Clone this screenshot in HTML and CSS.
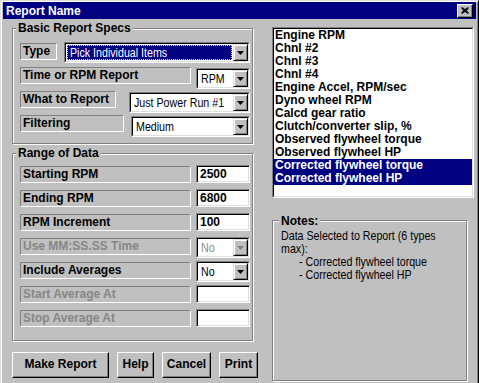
FILE: index.html
```html
<!DOCTYPE html>
<html>
<head>
<meta charset="utf-8">
<link rel="stylesheet" href="styles.css">
</head>
<body>
<div class="window">
  <div class="titlebar">
    <span class="title">Report Name</span>
    <span class="close"><svg width="8" height="7" viewBox="0 0 8 7"><path d="M0.5 0.5 L7.5 6.5 M1.5 0.5 L7.5 5.5 M0.5 1.5 L6.5 6.5 M7.5 0.5 L0.5 6.5 M6.5 0.5 L0.5 5.5 M7.5 1.5 L1.5 6.5" stroke="#000" stroke-width="1" fill="none"/></svg></span>
  </div>
  <div class="main">
    <div class="left">
      <div class="group g1">
        <div class="legend">Basic Report Specs</div>
        <div class="row first">
          <div class="lbl w-type">Type</div>
          <div class="combo w-typec"><div class="combo-in"><div class="val"><div class="sel"><span class="nar">Pick Individual Items</span></div></div><div class="dbtn"><svg width="7" height="4" viewBox="0 0 7 4"><path d="M0 0H7L3.5 4Z" fill="#000"/></svg></div></div></div>
        </div>
        <div class="row">
          <div class="lbl w-time">Time or RPM Report</div>
          <div class="combo w-small"><div class="combo-in"><div class="val"><span class="nar">RPM</span></div><div class="dbtn"><svg width="7" height="4" viewBox="0 0 7 4"><path d="M0 0H7L3.5 4Z" fill="#000"/></svg></div></div></div>
        </div>
        <div class="row">
          <div class="lbl w-what">What to Report</div>
          <div class="combo w-whatc"><div class="combo-in"><div class="val"><span class="nar">Just Power Run #1</span></div><div class="dbtn"><svg width="7" height="4" viewBox="0 0 7 4"><path d="M0 0H7L3.5 4Z" fill="#000"/></svg></div></div></div>
        </div>
        <div class="row">
          <div class="lbl w-filt">Filtering</div>
          <div class="combo w-filtc"><div class="combo-in"><div class="val"><span class="nar">Medium</span></div><div class="dbtn"><svg width="7" height="4" viewBox="0 0 7 4"><path d="M0 0H7L3.5 4Z" fill="#000"/></svg></div></div></div>
        </div>
      </div>

      <div class="group g2">
        <div class="legend">Range of Data</div>
        <div class="row2">
          <div class="lbl w-long">Starting RPM</div>
          <div class="input">2500</div>
        </div>
        <div class="row2">
          <div class="lbl w-long">Ending RPM</div>
          <div class="input">6800</div>
        </div>
        <div class="row2">
          <div class="lbl w-long">RPM Increment</div>
          <div class="input">100</div>
        </div>
        <div class="row2">
          <div class="lbl w-long disabled">Use MM:SS.SS Time</div>
          <div class="combo w-small disabled"><div class="combo-in"><div class="val"><span class="nar">No</span></div><div class="dbtn"><svg width="7" height="4" viewBox="0 0 7 4"><path d="M0 0H7L3.5 4Z" fill="#808080"/></svg></div></div></div>
        </div>
        <div class="row2">
          <div class="lbl w-long">Include Averages</div>
          <div class="combo w-small"><div class="combo-in"><div class="val"><span class="nar">No</span></div><div class="dbtn"><svg width="7" height="4" viewBox="0 0 7 4"><path d="M0 0H7L3.5 4Z" fill="#000"/></svg></div></div></div>
        </div>
        <div class="row2">
          <div class="lbl w-long disabled">Start Average At</div>
          <div class="input"></div>
        </div>
        <div class="row2">
          <div class="lbl w-long disabled">Stop Average At</div>
          <div class="input"></div>
        </div>
      </div>

      <div class="buttons">
        <div class="btn w-make">Make Report</div>
        <div class="btn w-help">Help</div>
        <div class="btn w-cancel">Cancel</div>
        <div class="btn w-print">Print</div>
      </div>
    </div>

    <div class="right">
      <div class="listbox">
        <div class="list-in">
          <div class="item">Engine RPM</div>
          <div class="item">Chnl #2</div>
          <div class="item">Chnl #3</div>
          <div class="item">Chnl #4</div>
          <div class="item">Engine Accel, RPM/sec</div>
          <div class="item">Dyno wheel RPM</div>
          <div class="item">Calcd gear ratio</div>
          <div class="item">Clutch/converter slip, %</div>
          <div class="item">Observed flywheel torque</div>
          <div class="item">Observed flywheel HP</div>
          <div class="item selected">Corrected flywheel torque</div>
          <div class="item selected">Corrected flywheel HP</div>
        </div>
      </div>
      <div class="group notes">
        <div class="legend">Notes:</div>
        <div class="notes-text">
          <div class="nline"><span class="nar">Data Selected to Report (6 types</span></div>
          <div class="nline"><span class="nar">max):</span></div>
          <div class="nline indent"><span class="nar">- Corrected flywheel torque</span></div>
          <div class="nline indent"><span class="nar">- Corrected flywheel HP</span></div>
        </div>
      </div>
    </div>
  </div>
</div>
</body>
</html>
```
FILE: styles.css
```css
* { box-sizing: border-box; }
body {
  margin: 0;
  background: #c0c0c0;
  font-family: "Liberation Sans", Arial, sans-serif;
}
.window {
  width: 479px;
  height: 383px;
  border-top: 1px solid #dfdfdf;
  border-left: 1px solid #dfdfdf;
  border-right: 1px solid #000;
  box-shadow: inset 1px 1px 0 #fff, inset -1px 0 0 #808080;
  padding: 1px 2px 0 2px;
  overflow: hidden;
}
.titlebar {
  height: 17px;
  background: #000080;
  color: #fff;
  font: bold 12px "Liberation Sans", Arial, sans-serif;
  display: flex;
  align-items: center;
  justify-content: space-between;
  padding: 0 3px 0 3px;
}
.close {
  width: 16px;
  height: 14px;
  background: #c0c0c0;
  border-top: 1px solid #fff;
  border-left: 1px solid #fff;
  border-right: 1px solid #000;
  border-bottom: 1px solid #000;
  box-shadow: inset -1px -1px 0 #808080;
  display: flex;
  align-items: center;
  justify-content: center;
}
.close svg { display: block; }
.main {
  display: flex;
  padding-left: 9px;
}
.left { width: 246px; }
.right { width: 202px; margin-left: 14px; }

.nar {
  display: inline-block;
  font-size: 13px;
  transform: scaleX(0.82);
  transform-origin: 0 50%;
  white-space: nowrap;
}

.group {
  border: 1px solid #808080;
  box-shadow: 1px 1px 0 #fff, inset 1px 1px 0 #fff;
}
.legend {
  width: fit-content;
  background: #c0c0c0;
  padding: 0 2px;
  font: bold 12px/14px "Liberation Sans", Arial, sans-serif;
  color: #000;
}
.g1 {
  width: 241px;
  margin-top: 9px;
  padding: 0 2px 5px 7px;
}
.g1 .legend { margin: -8px 0 7px -4px; }
.g2 {
  width: 241px;
  margin-top: 9px;
  padding: 0 2px 7px 7px;
}
.g2 .legend { margin: -8px 0 5px -4px; }

.row {
  display: flex;
  justify-content: space-between;
  align-items: flex-start;
  height: 24px;
}
.row .lbl { margin-top: 1px; }
.row .combo { margin-top: 2px; }
.row.first .combo { margin-top: 0; }
.row2 {
  display: flex;
  justify-content: space-between;
  align-items: flex-start;
  height: 24px;
}
.row2 .lbl { margin-top: 1px; }

.lbl {
  height: 17px;
  border-top: 1px solid #808080;
  border-left: 1px solid #808080;
  border-bottom: 1px solid #fff;
  border-right: 1px solid #fff;
  padding-left: 2px;
  font: bold 12px/15px "Liberation Sans", Arial, sans-serif;
  color: #000;
  white-space: nowrap;
}
.lbl.disabled { color: #868686; }
.w-type { width: 37px; }
.w-time { width: 171px; }
.w-what { width: 96px; }
.w-filt { width: 104px; }
.w-long { width: 171px; }

.combo {
  height: 21px;
  border-top: 1px solid #808080;
  border-left: 1px solid #808080;
  border-bottom: 1px solid #fff;
  border-right: 1px solid #fff;
}
.combo-in {
  height: 100%;
  border-top: 1px solid #000;
  border-left: 1px solid #000;
  border-bottom: 1px solid #dfdfdf;
  border-right: 1px solid #dfdfdf;
  background: #fff;
  display: flex;
}
.w-typec { width: 186px; }
.w-small { width: 54px; }
.w-whatc { width: 121px; }
.w-filtc { width: 119px; }

.val {
  flex: 1;
  min-width: 0;
  font: 13px/17px "Liberation Sans", Arial, sans-serif;
  color: #000;
  padding-left: 3px;
  white-space: nowrap;
  overflow: hidden;
}
.val .sel {
  margin: 1px 1px 1px -2px;
  height: 15px;
  line-height: 13px;
  padding-left: 2px;
  background: #000080;
  color: #fff;
  border: 1px dotted #f0f0b0;
  overflow: hidden;
}
.combo.disabled .val { color: #8a8a8a; }
.dbtn {
  flex: none;
  width: 15px;
  height: 100%;
  background: #c0c0c0;
  border-top: 1px solid #dfdfdf;
  border-left: 1px solid #dfdfdf;
  border-right: 1px solid #000;
  border-bottom: 1px solid #000;
  box-shadow: inset 1px 1px 0 #fff, inset -1px -1px 0 #808080;
  display: flex;
  align-items: center;
  justify-content: center;
}
.dbtn svg { display: block; }

.input {
  width: 54px;
  height: 18px;
  border-top: 1px solid #808080;
  border-left: 1px solid #808080;
  border-bottom: 1px solid #fff;
  border-right: 1px solid #fff;
  box-shadow: inset 1px 1px 0 #000, inset -1px -1px 0 #dfdfdf;
  background: #fff;
  padding-left: 3px;
  font: bold 12px/16px "Liberation Sans", Arial, sans-serif;
  color: #000;
}

.buttons {
  display: flex;
  justify-content: space-between;
  margin-top: 11px;
}
.btn {
  height: 26px;
  border-top: 1px solid #fff;
  border-left: 1px solid #fff;
  border-right: 1px solid #000;
  border-bottom: 1px solid #000;
  box-shadow: inset -1px -1px 0 #808080;
  font: bold 12px/23px "Liberation Sans", Arial, sans-serif;
  text-align: center;
  color: #000;
}
.w-make { width: 97px; }
.w-help { width: 37px; }
.w-cancel { width: 49px; }
.w-print { width: 39px; }

.listbox {
  margin-top: 8px;
  width: 202px;
  height: 171px;
  border-top: 1px solid #808080;
  border-left: 1px solid #808080;
  border-bottom: 1px solid #fff;
  border-right: 1px solid #fff;
}
.list-in {
  height: 100%;
  background: #fff;
  border-top: 1px solid #000;
  border-left: 1px solid #000;
  border-bottom: 1px solid #dfdfdf;
  border-right: 1px solid #dfdfdf;
}
.item {
  height: 13px;
  font: bold 12px/13px "Liberation Sans", Arial, sans-serif;
  color: #000;
  padding-left: 1px;
  white-space: nowrap;
}
.item.selected {
  background: #000080;
  color: #fff;
}

.notes {
  width: 195px;
  height: 161px;
  margin-top: 22px;
  padding: 0 6px;
}
.notes .legend { margin: -7px 0 1px 0; }
.notes-text {
  font: 13px/13px "Liberation Sans", Arial, sans-serif;
  color: #000;
  margin-left: 2px;
}
.nline { height: 13px; white-space: nowrap; }
.nline .nar { line-height: 13px; }
.notes-text .indent { padding-left: 18px; }
```
